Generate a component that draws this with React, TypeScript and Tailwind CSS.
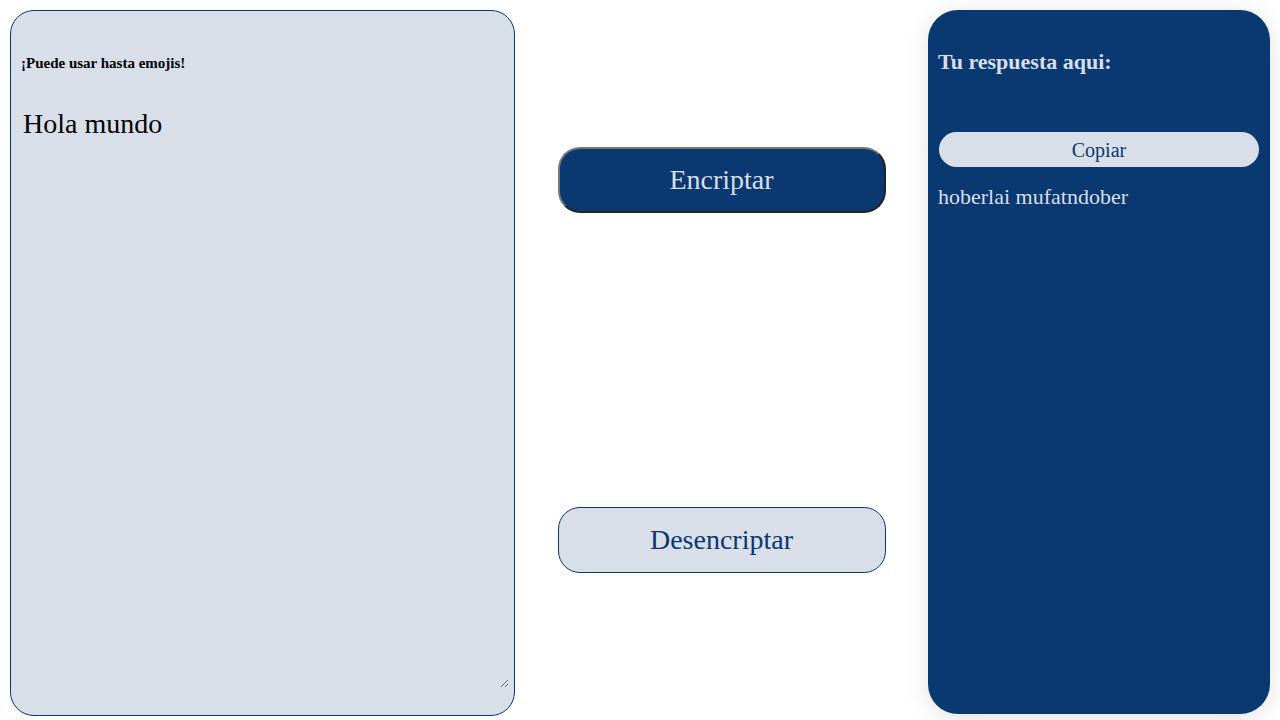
import { useState } from "react";

export default function App() {
  const [text, setText] = useState("Hola mundo");
  const result = "hoberlai mufatndober";

  return (
    <div className="flex h-[720px] w-[1280px] bg-white p-[10px] font-['Liberation_Serif',serif]">
      {/* entrada */}
      <div className="flex h-[706px] w-[505px] flex-col rounded-[24px] border border-[#0a3871] bg-[#d8dfe8] pl-[10px] pr-[5px]">
        <h4 className="mt-[44px] text-[15px] font-bold leading-[16px] text-black">¡Puede usar hasta emojis!</h4>
        <textarea
          value={text}
          onChange={(e) => setText(e.target.value)}
          className="mt-[35px] h-[582px] w-[488px] resize bg-transparent p-[2px] text-[28px] leading-[32px] text-black outline-none"
        />
      </div>

      {/* botones */}
      <div className="flex flex-1 flex-col items-center pt-[137px]">
        <button className="h-[66px] w-[328px] rounded-[22px] border-2 border-t-[#777] border-l-[#777] border-r-[#222] border-b-[#222] bg-[#0a3871] text-[28px] text-[#d8dfe8]">
          Encriptar
        </button>
        <button className="mt-[294px] h-[66px] w-[328px] rounded-[22px] border border-[#0a3871] bg-[#d8dfe8] text-[28px] text-[#0a3871]">
          Desencriptar
        </button>
      </div>

      {/* salida */}
      <div className="flex h-[704px] w-[342px] flex-col rounded-[30px] bg-[#0a3871] px-[10px] shadow-[0_4px_24px_rgba(0,0,0,0.12)]">
        <h3 className="mt-[39px] text-[22px] font-bold leading-[26px] text-[#d8dfe8]">Tu respuesta aqui:</h3>
        <button className="ml-px mt-[57px] h-[35px] w-[320px] rounded-full bg-[#d8dfe8] text-[20px] text-[#0a3871]">
          Copiar
        </button>
        <p className="mt-[17px] text-[22px] leading-[25px] text-[#d8dfe8]">{result}</p>
      </div>
    </div>
  );
}
